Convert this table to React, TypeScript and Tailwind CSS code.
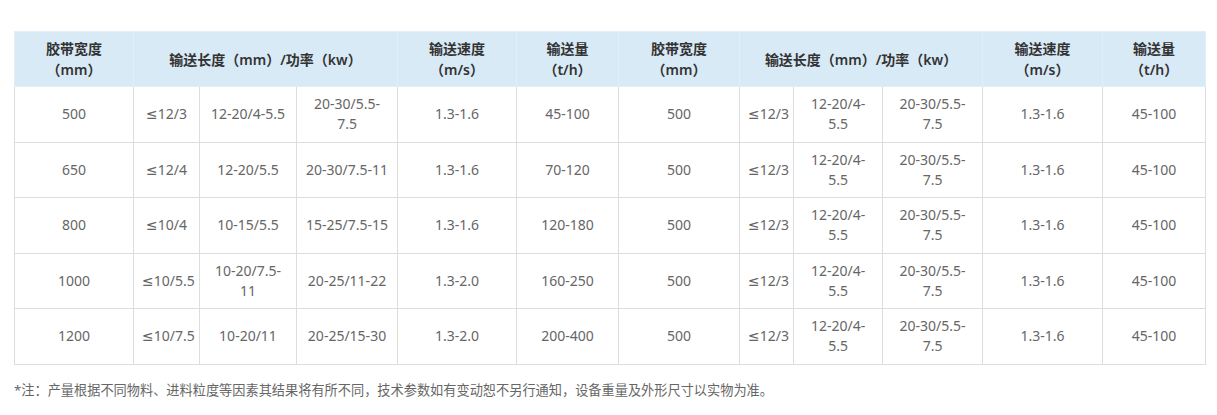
import React from "react";

const left = [
  ["500", "≤12/3", "12-20/4-5.5", "20-30/5.5-7.5", "1.3-1.6", "45-100"],
  ["650", "≤12/4", "12-20/5.5", "20-30/7.5-11", "1.3-1.6", "70-120"],
  ["800", "≤10/4", "10-15/5.5", "15-25/7.5-15", "1.3-1.6", "120-180"],
  ["1000", "≤10/5.5", "10-20/7.5-11", "20-25/11-22", "1.3-2.0", "160-250"],
  ["1200", "≤10/7.5", "10-20/11", "20-25/15-30", "1.3-2.0", "200-400"],
];

const right = ["500", "≤12/3", "12-20/4-5.5", "20-30/5.5-7.5", "1.3-1.6", "45-100"];

const widths = [119, 66, 97, 101, 119, 102, 121, 54, 89, 100, 120, 103];

function HeaderGroup() {
  return (
    <>
      <th className="border border-[#e4eef6] px-2 font-semibold">
        胶带宽度
        <br />
        （mm）
      </th>
      <th colSpan={3} className="border border-[#e4eef6] px-2 font-semibold">
        输送长度（mm）/功率（kw）
      </th>
      <th className="border border-[#e4eef6] px-2 font-semibold">
        输送速度
        <br />
        （m/s）
      </th>
      <th className="border border-[#e4eef6] px-2 font-semibold">
        输送量
        <br />
        （t/h）
      </th>
    </>
  );
}

export default function App() {
  return (
    <div
      className="bg-white pt-[31px] pl-[14px] w-[1217px] h-[415px]"
      style={{ fontFamily: '"Noto Sans", "DejaVu Sans", "Noto Sans CJK SC", sans-serif' }}
    >
      <table className="table-fixed border-collapse w-[1190px] text-[14px] leading-[20px] text-center">
        <colgroup>
          {widths.map((w, i) => (
            <col key={i} style={{ width: w }} />
          ))}
        </colgroup>
        <thead>
          <tr className="h-[55px] bg-[#d9eaf7] text-[#333] leading-[21px]">
            <HeaderGroup />
            <HeaderGroup />
          </tr>
        </thead>
        <tbody className="text-[#666]">
          {left.map((row, r) => (
            <tr key={r} className="h-[55.5px]">
              {[...row, ...right].map((cell, c) => (
                <td key={c} className="border border-[#dddddd] px-2">
                  {cell}
                </td>
              ))}
            </tr>
          ))}
        </tbody>
      </table>
      <p className="mt-[15px] text-[13.2px] leading-[20px] text-[#666]">
        *注：产量根据不同物料、进料粒度等因素其结果将有所不同，技术参数如有变动恕不另行通知，设备重量及外形尺寸以实物为准。
      </p>
    </div>
  );
}
